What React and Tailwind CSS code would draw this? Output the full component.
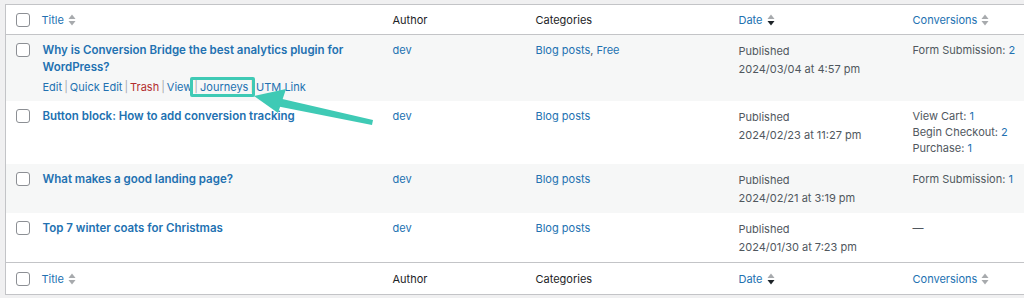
// Posts list table with an annotation arrow pointing at "Journeys"
const posts = [
  {
    title: "Why is Conversion Bridge the best analytics plugin for WordPress?",
    cats: ["Blog posts", "Free"],
    date: "2024/03/04 at 4:57 pm",
    conv: [["Form Submission", 2]],
    actions: true,
    striped: true,
  },
  {
    title: "Button block: How to add conversion tracking",
    cats: ["Blog posts"],
    date: "2024/02/23 at 11:27 pm",
    conv: [["View Cart", 1], ["Begin Checkout", 2], ["Purchase", 1]],
  },
  {
    title: "What makes a good landing page?",
    cats: ["Blog posts"],
    date: "2024/02/21 at 3:19 pm",
    conv: [["Form Submission", 1]],
    striped: true,
  },
  {
    title: "Top 7 winter coats for Christmas",
    cats: ["Blog posts"],
    date: "2024/01/30 at 7:23 pm",
    conv: [],
  },
]

function SortIcon({ active }) {
  return (
    <svg width="8" height="12" viewBox="0 0 8 12" className="inline-block ml-1 -mt-px">
      <path d="M4 0.5 L7.5 5 L0.5 5 Z" fill="#a7aaad" />
      <path d="M0.5 7 L7.5 7 L4 11.5 Z" fill={active ? "#1d2327" : "#a7aaad"} />
    </svg>
  )
}

function Checkbox() {
  return <div className="w-[14px] h-[14px] rounded-[3px] border border-[#8c8f94] bg-white" />
}

function HeadRow({ top }) {
  const b = top ? "border-b" : "border-t"
  return (
    <tr className={`${b} border-[#c3c4c7] bg-white`}>
      <td className={top ? "pl-[10px] pt-[8px] pb-[7px]" : "pl-[10px] pt-[9px] pb-[8px]"}><Checkbox /></td>
      <td className="px-2"><span className="text-[#2271b1]">Title</span><SortIcon /></td>
      <td className="px-2 text-[#1d2327]">Author</td>
      <td className="px-2 text-[#1d2327]">Categories</td>
      <td className="px-2"><span className="text-[#2271b1]">Date</span><SortIcon active /></td>
      <td className="px-2"><span className="text-[#2271b1]">Conversions</span><SortIcon /></td>
    </tr>
  )
}

function Sep() {
  return <span className="text-[#a7aaad] mx-[2px]">|</span>
}

export default function App() {
  return (
    <div className="relative w-[1024px] h-[298px] bg-[#f0f0f1] pt-[4px] pl-[5px] overflow-hidden text-[11px] leading-[18px] font-['Inter',sans-serif]">
      <table className="table-fixed w-[1040px] border-collapse border border-[#c3c4c7] bg-white">
        <colgroup>
          <col className="w-[28px]" />
          <col className="w-[351px]" />
          <col className="w-[143px]" />
          <col className="w-[203px]" />
          <col className="w-[174px]" />
          <col />
        </colgroup>
        <thead>
          <HeadRow top />
        </thead>
        <tbody>
          {posts.map((p, i) => (
            <tr key={i} className={`align-top ${p.striped ? "bg-[#f6f7f7]" : "bg-white"}`}>
              <td className="pl-[10px] pt-[8px]"><Checkbox /></td>
              <td className={`px-2 pt-[7px] ${p.actions ? "pb-[5px]" : "pb-[6px]"}`}>
                <div className="text-[#2271b1] font-semibold text-[11.5px] leading-[17px] pl-px">{p.title}</div>
                {p.actions && (
                  <div className="pt-[2px] text-[#2271b1] pl-px">
                    <span>Edit</span><Sep />
                    <span>Quick Edit</span><Sep />
                    <span className="text-[#b32d2e]">Trash</span><Sep />
                    <span>View</span><Sep />
                    <span className="relative">
                      Journeys
                      <span className="absolute -left-[10px] -right-[7px] -top-[3px] -bottom-[3px] border-[3px] border-[#3fcab5] rounded-[2px]" />
                    </span>
                    <Sep />
                    <span>UTM Link</span>
                  </div>
                )}
              </td>
              <td className="px-2 pt-[6px] text-[#2271b1]">dev</td>
              <td className="px-2 pt-[6px] text-[#2271b1]">
                {p.cats.map((c, j) => (
                  <span key={j}>{j > 0 && <span className="text-[#50575e]">, </span>}{c}</span>
                ))}
              </td>
              <td className="px-2 pt-[7px] pb-[6px] text-[#50575e]">
                <div>Published</div>
                <div>{p.date}</div>
              </td>
              <td className="px-2 pt-[7px] pb-[8px] text-[#50575e] leading-[16px]">
                {p.conv.length === 0 && <div>—</div>}
                {p.conv.map(([k, v]) => (
                  <div key={k}>{k}: <span className="text-[#2271b1]">{v}</span></div>
                ))}
              </td>
            </tr>
          ))}
        </tbody>
        <tfoot>
          <HeadRow />
        </tfoot>
      </table>

      <svg className="absolute left-0 top-0 pointer-events-none" width="1024" height="298">
        <path d="M254 96 L286 89 L278 113 Z" fill="#3fcab5" />
        <path d="M278 98 L373 120 L372 125 L276 106 Z" fill="#3fcab5" />
      </svg>
    </div>
  )
}
